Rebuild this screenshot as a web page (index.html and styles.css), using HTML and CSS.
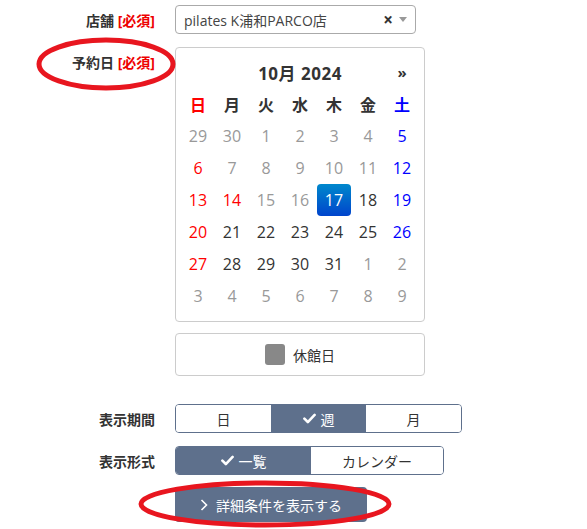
FILE: index.html
```html
<html>

<head>
    <meta charset="utf-8">
    <title>予約</title>
    <link rel="stylesheet" href="styles.css">
</head>

<body>
    <div id="page">
        <div class="row">
            <div class="label">店舗 <span class="req">[必須]</span></div>
            <div class="select">
                <span class="select-text">pilates K浦和PARCO店</span>
                <span class="select-clear">×</span>
                <span class="select-arrow"></span>
            </div>
        </div>

        <div class="row row-date">
            <div class="label label-top">予約日 <span class="req">[必須]</span></div>
            <div class="field">
                <div class="datepicker">
                    <div class="dp-grid">
                        <div class="dp-title">10月 2024</div>
                        <div class="dp-next">»</div>

                        <div class="dow sun">日</div>
                        <div class="dow">月</div>
                        <div class="dow">火</div>
                        <div class="dow">水</div>
                        <div class="dow">木</div>
                        <div class="dow">金</div>
                        <div class="dow sat">土</div>

                        <div class="day old">29</div>
                        <div class="day old">30</div>
                        <div class="day old">1</div>
                        <div class="day old">2</div>
                        <div class="day old">3</div>
                        <div class="day old">4</div>
                        <div class="day sat">5</div>

                        <div class="day sun">6</div>
                        <div class="day old">7</div>
                        <div class="day old">8</div>
                        <div class="day old">9</div>
                        <div class="day old">10</div>
                        <div class="day old">11</div>
                        <div class="day sat">12</div>

                        <div class="day sun">13</div>
                        <div class="day sun">14</div>
                        <div class="day old">15</div>
                        <div class="day old">16</div>
                        <div class="day active">17</div>
                        <div class="day">18</div>
                        <div class="day sat">19</div>

                        <div class="day sun">20</div>
                        <div class="day">21</div>
                        <div class="day">22</div>
                        <div class="day">23</div>
                        <div class="day">24</div>
                        <div class="day">25</div>
                        <div class="day sat">26</div>

                        <div class="day sun">27</div>
                        <div class="day">28</div>
                        <div class="day">29</div>
                        <div class="day">30</div>
                        <div class="day">31</div>
                        <div class="day old">1</div>
                        <div class="day old">2</div>

                        <div class="day old">3</div>
                        <div class="day old">4</div>
                        <div class="day old">5</div>
                        <div class="day old">6</div>
                        <div class="day old">7</div>
                        <div class="day old">8</div>
                        <div class="day old">9</div>
                    </div>
                </div>
                <div class="legend">
                    <span class="swatch"></span>
                    <span>休館日</span>
                </div>
            </div>
        </div>

        <div class="row row-period">
            <div class="label">表示期間</div>
            <div class="seg seg-period">
                <div class="seg-item">日</div>
                <div class="seg-item on">
                    <svg class="check" viewBox="0 0 14 14" width="13" height="13"><path d="M1.5 7.2 L5.2 10.8 L12.5 3.2" fill="none" stroke="#fff" stroke-width="2.8" stroke-linecap="round" stroke-linejoin="round"/></svg>週
                </div>
                <div class="seg-item">月</div>
            </div>
        </div>

        <div class="row row-format">
            <div class="label">表示形式</div>
            <div class="seg seg-format">
                <div class="seg-item on">
                    <svg class="check" viewBox="0 0 14 14" width="13" height="13"><path d="M1.5 7.2 L5.2 10.8 L12.5 3.2" fill="none" stroke="#fff" stroke-width="2.8" stroke-linecap="round" stroke-linejoin="round"/></svg>一覧
                </div>
                <div class="seg-item">カレンダー</div>
            </div>
        </div>

        <div class="row row-more">
            <div class="label"></div>
            <button class="more-btn">
                <svg viewBox="0 0 8 12" width="8" height="12"><path d="M1.5 1 L6.5 6 L1.5 11" fill="none" stroke="#fff" stroke-width="1.6"/></svg>
                詳細条件を表示する
            </button>
        </div>

        <!-- annotation marks drawn over the form -->
        <svg class="marks" width="587" height="529" viewBox="0 0 587 529">
            <ellipse cx="106" cy="64" rx="67" ry="24" fill="none" stroke="#e8161f" stroke-width="5"/>
            <ellipse cx="265" cy="504" rx="124" ry="21" fill="none" stroke="#e8161f" stroke-width="5"/>
        </svg>
    </div>
</body>

</html>
```

FILE: styles.css
```css
* {
    margin: 0;
    padding: 0;
    box-sizing: border-box;
}

body {
    background-color: white;
    color: #333;
    font-family: "Open Sans", "Noto Sans CJK JP", sans-serif;
    font-size: 14px;
}

#page {
    position: relative;
    width: 587px;
    height: 529px;
    padding-top: 5px;
    overflow: hidden;
}

.row {
    display: flex;
    align-items: center;
    gap: 20px;
}

.label {
    width: 155px;
    flex-shrink: 0;
    text-align: right;
    font-size: 14px;
    font-weight: bold;
    color: #333;
}
.label-top {
    align-self: flex-start;
    padding-top: 5px;
}
.req {
    color: #e00;
}

/* store select */
.select {
    display: flex;
    align-items: center;
    width: 241px;
    height: 29px;
    border: 1px solid #aaa;
    border-radius: 4px;
    padding: 0 8px;
    color: #444;
}
.select-text {
    flex: 1;
    font-size: 14px;
}
.select-clear {
    font-size: 17px;
    font-weight: bold;
    color: #333;
    margin-right: 6px;
}
.select-arrow {
    width: 0;
    height: 0;
    border-left: 4px solid transparent;
    border-right: 4px solid transparent;
    border-top: 5px solid #999;
}

/* date picker */
.row-date {
    margin-top: 13px;
}
.field {
    display: flex;
    flex-direction: column;
    gap: 11px;
}
.datepicker {
    width: 250px;
    height: 275px;
    border: 1px solid #ccc;
    border-radius: 4px;
    padding: 8px 5px;
}
.dp-grid {
    display: grid;
    grid-template-columns: repeat(7, 34px);
    grid-auto-rows: 32px;
    text-align: center;
    align-items: center;
}
.dp-title {
    grid-column: 2 / 7;
    font-size: 17px;
    font-weight: bold;
    letter-spacing: 0.5px;
}
.dp-next {
    grid-column: 7;
    font-size: 15px;
    font-weight: bold;
}
.dow {
    font-size: 16px;
    font-weight: bold;
}
.day {
    font-size: 16px;
    height: 32px;
    line-height: 32px;
    color: #333;
}
.old {
    color: #999;
}
.sun {
    color: #f00;
}
.sat {
    color: #00f;
}
.day.active {
    color: white;
    border-radius: 4px;
    background: linear-gradient(to bottom, #0088cc, #0044cc);
}

.legend {
    width: 250px;
    height: 43px;
    border: 1px solid #ccc;
    border-radius: 4px;
    display: flex;
    align-items: center;
    justify-content: center;
    gap: 8px;
    font-size: 14px;
}
.swatch {
    width: 20px;
    height: 21px;
    border-radius: 3px;
    background-color: #888;
}

/* segmented toggles */
.row-period {
    margin-top: 28px;
}
.row-format {
    margin-top: 13px;
}
.seg {
    display: flex;
    height: 29px;
    border: 1px solid #5e708c;
    border-radius: 4px;
    overflow: hidden;
}
.seg-item {
    display: flex;
    align-items: center;
    justify-content: center;
    gap: 5px;
    font-size: 14px;
    color: #333;
    background-color: white;
}
.seg-item.on {
    background-color: #5e708c;
    color: white;
}
.seg-period .seg-item {
    width: 95px;
}
.seg-format .seg-item:first-child {
    width: 135px;
}
.seg-format .seg-item:last-child {
    width: 132px;
}

.row-more {
    margin-top: 12px;
}
.more-btn {
    display: flex;
    align-items: center;
    justify-content: center;
    gap: 8px;
    width: 192px;
    height: 35px;
    border: none;
    border-radius: 4px;
    background-color: #5e708c;
    color: white;
    font-family: inherit;
    font-size: 14px;
}

.marks {
    position: absolute;
    left: 0;
    top: 0;
    pointer-events: none;
}
```
